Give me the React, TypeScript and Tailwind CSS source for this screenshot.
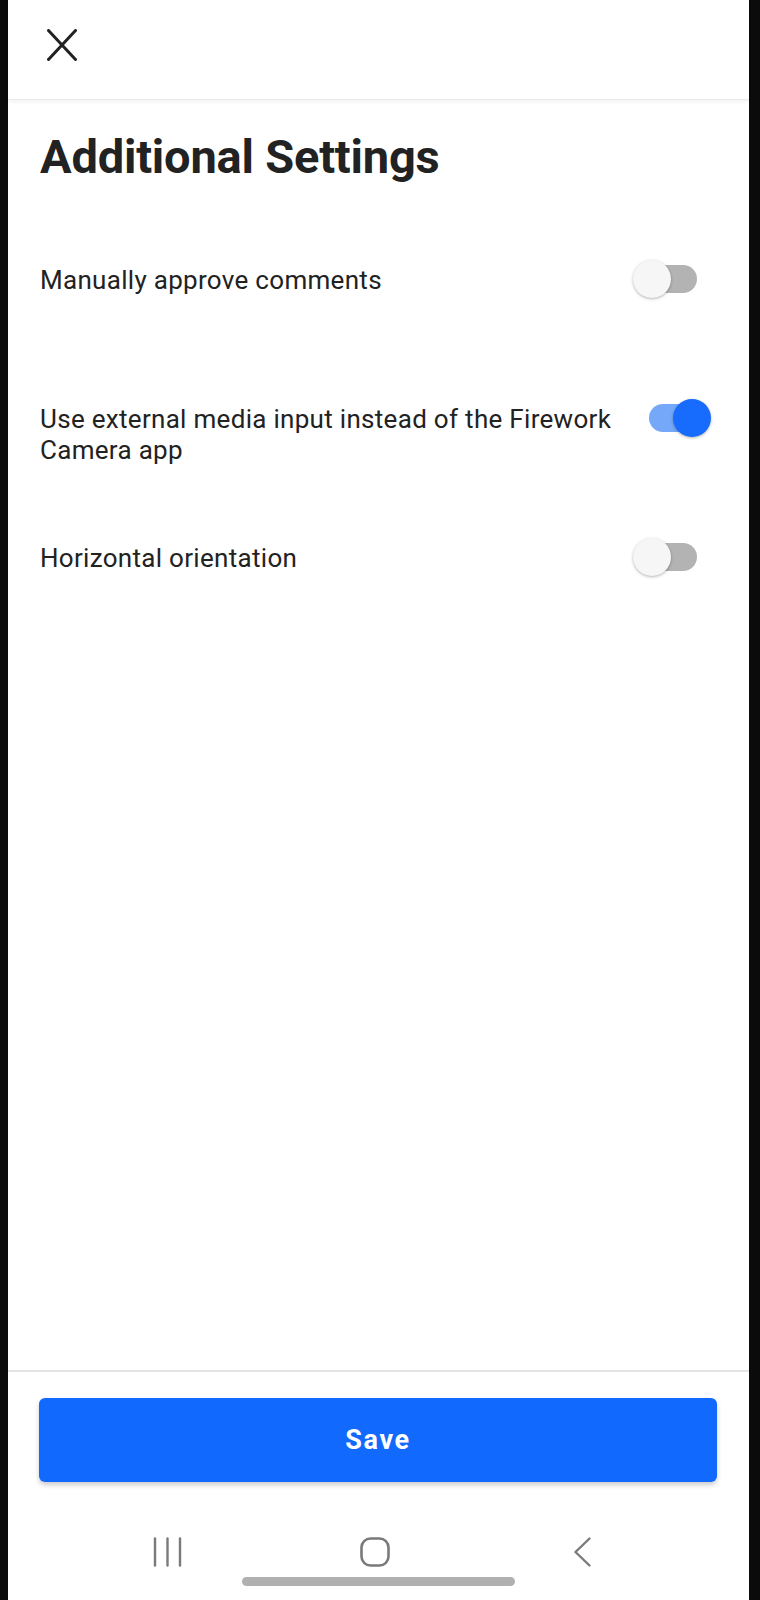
import { useState } from 'react';

const settings = [
  { id: 'comments', label: 'Manually approve comments', on: false },
  { id: 'external', label: 'Use external media input instead of the Firework Camera app', on: true },
  { id: 'horizontal', label: 'Horizontal orientation', on: false },
];

function Toggle({ on, onChange }: { on: boolean; onChange: () => void }) {
  return (
    <button onClick={onChange} className="relative w-[78px] h-[40px] shrink-0 -mt-[6px]">
      <span
        className={
          on
            ? 'absolute left-[16px] top-[6px] w-[50px] h-[28px] rounded-full bg-[#75a8f8]'
            : 'absolute left-[10px] top-[6px] w-[54px] h-[28px] rounded-full bg-[#b3b3b3]'
        }
      />
      <span
        className={
          on
            ? 'absolute left-[40px] top-[1px] w-[38px] h-[38px] rounded-full bg-[#176bfd] shadow-[0_1px_3px_rgba(0,0,0,0.3)]'
            : 'absolute left-0 top-[1px] w-[38px] h-[38px] rounded-full bg-[#f6f6f6] shadow-[0_1px_3px_rgba(0,0,0,0.3)]'
        }
      />
    </button>
  );
}

export default function App() {
  const [values, setValues] = useState<Record<string, boolean>>(
    Object.fromEntries(settings.map(s => [s.id, s.on]))
  );

  return (
    <div className="w-[760px] h-[1600px] bg-[#0b0b0b] flex" style={{ fontFamily: 'Roboto, "Liberation Sans", sans-serif' }}>
      <div className="ml-[8px] w-[741px] h-full bg-white flex flex-col text-[#222]">
        {/* Header */}
        <div className="relative z-10 h-[100px] shrink-0 border-b border-[#ebebeb] shadow-[0_2px_4px_rgba(0,0,0,0.05)] pl-[39px] pt-[29px]">
          <svg width="30" height="32" viewBox="0 0 30 32" fill="none" stroke="#222" strokeWidth="3" strokeLinecap="round">
            <line x1="1.5" y1="1.5" x2="28.5" y2="30.5" />
            <line x1="28.5" y1="1.5" x2="1.5" y2="30.5" />
          </svg>
        </div>

        {/* Title */}
        <h1 className="pl-[32px] pt-[29px] text-[47px] leading-[56px] font-bold tracking-[-0.2px]">Additional Settings</h1>

        {/* Settings rows */}
        <div className="mt-[80px] flex flex-col">
          {settings.map(s => (
            <div key={s.id} className="h-[139px] flex items-start pl-[32px] pr-[38px] gap-[6px]">
              <p className="flex-1 text-[26px] leading-[31px] tracking-[0.3px]">{s.label}</p>
              <Toggle on={values[s.id]} onChange={() => setValues(v => ({ ...v, [s.id]: !v[s.id] }))} />
            </div>
          ))}
        </div>

        <div className="flex-1" />

        {/* Footer */}
        <div className="shrink-0 border-t-2 border-[#e4e4e4] pt-[26px]">
          <button className="mx-[31px] w-[678px] h-[84px] rounded-[6px] bg-[#1169fe] shadow-[0_3px_5px_rgba(0,0,0,0.2)] text-white text-[27px] font-bold tracking-[1.6px]">
            Save
          </button>

          {/* Android nav bar */}
          <div className="h-[118px] flex flex-col">
            <div className="mt-[55px] h-[30px] flex items-center">
              <svg className="ml-[145px]" width="29" height="30" viewBox="0 0 29 30" stroke="#7a7a7a" strokeWidth="2.4" strokeLinecap="round">
                <line x1="2" y1="1.5" x2="2" y2="28.5" />
                <line x1="14.5" y1="1.5" x2="14.5" y2="28.5" />
                <line x1="27" y1="1.5" x2="27" y2="28.5" />
              </svg>
              <svg className="ml-[178px]" width="30" height="30" viewBox="0 0 30 30" fill="none" stroke="#7a7a7a" strokeWidth="2.6">
                <rect x="1.5" y="1.5" width="27" height="27" rx="9" />
              </svg>
              <svg className="ml-[184px]" width="17" height="30" viewBox="0 0 17 30" fill="none" stroke="#7a7a7a" strokeWidth="2.4" strokeLinecap="round" strokeLinejoin="round">
                <polyline points="15.5,1.5 1.5,15 15.5,28.5" />
              </svg>
            </div>
            <div className="mt-[10px] mx-auto w-[273px] h-[9px] rounded-full bg-[#b0b0b0]" />
          </div>
        </div>
      </div>
    </div>
  );
}
